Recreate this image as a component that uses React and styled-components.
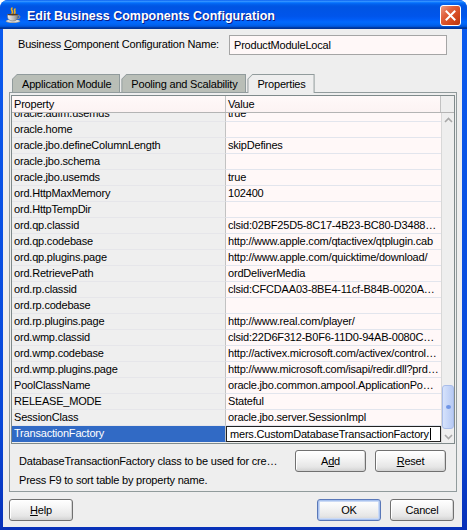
import React from 'react';
import styled, { createGlobalStyle } from 'styled-components';

const GlobalStyle = createGlobalStyle`
  * { box-sizing: border-box; }
  body {
    margin: 0;
    background: #ffffff;
    font-family: "Liberation Sans", Arial, sans-serif;
    font-size: 11px;
    letter-spacing: -0.2px;
    color: #000;
  }
`;

const Window = styled.div`
  width: 467px;
  height: 530px;
  display: flex;
  flex-direction: column;
  background: linear-gradient(to bottom, #0a5bf0, #0847d8 80%, #0831b8);
  border-radius: 8px 8px 0 0;
  overflow: hidden;
`;

const TitleBar = styled.div`
  height: 29px;
  flex-shrink: 0;
  display: flex;
  align-items: center;
  padding: 2px 6px 0 5px;
  gap: 5px;
  background: linear-gradient(to bottom, #0058ee 0%, #3a93ff 4%, #288eff 6%, #127dff 8%, #036ffc 10%, #0262ee 14%, #0057e5 20%, #0054e3 24%, #0055eb 56%, #005bf5 66%, #026afe 76%, #0062ef 86%, #0052d6 92%, #0040ab 94%, #003092 100%);
`;

const Title = styled.div`
  flex: 1;
  color: #fff;
  font-family: "Liberation Sans", Arial, sans-serif;
  font-weight: bold;
  font-size: 12.5px;
  letter-spacing: 0;
  text-shadow: 1px 1px 0 #0a1883;
  white-space: nowrap;
`;

const CloseButton = styled.div`
  width: 21px;
  height: 21px;
  border: 1px solid #fff;
  border-radius: 3px;
  background: linear-gradient(135deg, #eb9b84 0%, #e0603c 35%, #d2461b 70%, #b8360f 100%);
  display: flex;
  align-items: center;
  justify-content: center;
`;

const Client = styled.div`
  flex: 1;
  margin: 0 5px 3px 3px;
  background: #eeeeee;
  display: flex;
  flex-direction: column;
`;

const NameRow = styled.div`
  display: flex;
  align-items: center;
  padding: 6px 15px 0 15px;
`;

const Label = styled.div`
  flex: 1;
  white-space: nowrap;
  margin-top: -2px;
`;

const TextInput = styled.div`
  width: 218px;
  height: 20px;
  border: 1px solid #a5a5a5;
  background: #fff8f8;
  padding: 0 4px;
  display: flex;
  align-items: center;
`;

const TabStrip = styled.div`
  margin-top: 19px;
  height: 18px;
  padding-left: 9px;
  display: flex;
  align-items: flex-start;
  gap: 1px;
`;

const Tab = styled.div`
  position: relative;
  z-index: ${p => (p.$active ? 1 : 0)};
  height: ${p => (p.$active ? 19 : 18)}px;
  padding: 1px 1px 0 1px;
  background: #919b9c;
  clip-path: polygon(5px 0, 100% 0, 100% 100%, 0 100%, 0 5px);
`;

const TabFace = styled.div`
  height: 100%;
  padding: 0 8px 0 9px;
  display: flex;
  align-items: center;
  white-space: nowrap;
  background: ${p => (p.$active ? '#eeeeee' : '#b9beb7')};
  clip-path: polygon(4px 0, 100% 0, 100% 100%, 0 100%, 0 4px);
`;

const Panel = styled.div`
  height: 400px;
  margin: 0 5px 0 6px;
  border: 1px solid #919b9c;
  padding: 2px 1px 0 1px;
  display: flex;
  flex-direction: column;
`;

const Table = styled.div`
  border: 1px solid #7f8a8b;
  display: flex;
  flex-direction: column;
`;

const Header = styled.div`
  display: grid;
  grid-template-columns: 214px 215px 1fr;
  height: 17px;
  border-bottom: 1px solid #b4b4b4;
`;

const HeadCell = styled.div`
  background: ${p => (p.$blank ? '#eeeeee' : 'linear-gradient(to bottom, #fff9f9, #fcf3f3)')};
  border-right: 1px solid #c2c2c2;
  padding: 0 2px;
  line-height: 16px;
  &:last-child { border-right: none; }
`;

const Body = styled.div`
  height: 330px;
  display: flex;
`;

const Rows = styled.div`
  flex: 1;
  overflow: hidden;
`;

const RowList = styled.div`
  margin-top: -7px;
`;

const Row = styled.div`
  display: grid;
  grid-template-columns: 214px 1fr;
  height: 16px;
`;

const PropCell = styled.div`
  background: ${p => (p.$selected ? '#316ac5' : '#efefef')};
  color: ${p => (p.$selected ? '#fff' : '#000')};
  border-right: 1px solid #c2c2c2;
  border-bottom: 1px solid ${p => (p.$selected ? '#316ac5' : '#e6e6ea')};
  padding: 0 2px;
  line-height: 15px;
  white-space: nowrap;
  overflow: hidden;
`;

const ValueCell = styled.div`
  background: #fff8f8;
  border-bottom: 1px solid #e2e5ed;
  padding: 0 2px;
  line-height: 15px;
  white-space: nowrap;
  overflow: hidden;
  text-overflow: ellipsis;
`;

const EditCell = styled.div`
  background: #fff;
  border: 1px solid #222;
  padding: 0 3px;
  display: flex;
  align-items: center;
  white-space: nowrap;
  overflow: hidden;
`;

const Caret = styled.span`
  display: inline-block;
  width: 1px;
  height: 12px;
  margin-left: 1px;
  background: #000;
`;

const ScrollBar = styled.div`
  width: 13px;
  background: #eeeeee;
  border-left: 1px solid #d8d8d8;
  display: flex;
  flex-direction: column;
`;

const Arrow = styled.div`
  height: 13px;
  display: flex;
  align-items: center;
  justify-content: center;
`;

const Track = styled.div`
  flex: 1;
  display: flex;
  flex-direction: column;
  justify-content: flex-end;
  padding: 0 0 1px 0;
`;

const Thumb = styled.div`
  height: 44px;
  border: 1px solid #a9bdea;
  border-radius: 3px;
  background: linear-gradient(to right, #d6e2fb, #c6d6f8 50%, #b7caf3);
  display: flex;
  align-items: center;
  justify-content: center;
`;

const Grip = styled.div`
  width: 5px;
  height: 4px;
  border-radius: 50%;
  background: #6f95e6;
`;

const DescRow = styled.div`
  display: flex;
  align-items: flex-start;
  margin-top: 6px;
  padding: 0 9px 0 8px;
`;

const DescText = styled.div`
  flex: 1;
  min-width: 0;
  margin-right: 13px;
`;

const DescLine = styled.div`
  line-height: ${p => p.$h}px;
  white-space: nowrap;
  overflow: hidden;
  text-overflow: ellipsis;
`;

const ButtonGroup = styled.div`
  display: flex;
  gap: 9px;
`;

const Button = styled.button`
  width: ${p => p.$w}px;
  height: 22px;
  padding: 0;
  font-family: "Liberation Sans", Arial, sans-serif;
  font-size: 11px;
  letter-spacing: -0.2px;
  color: #000;
  border: 1px solid ${p => (p.$default ? '#5a78b8' : '#707070')};
  border-radius: 3px;
  background: linear-gradient(to bottom, #ffffff 0%, #f6f6f6 35%, #e6e6e6 80%, #d2d2d2 100%);
  box-shadow: ${p => (p.$default
    ? 'inset 0 0 0 1px #a9c2ee, inset 0 0 0 2px #cbdaf5'
    : 'inset -1px -1px 0 #d4d4d4, inset 1px 1px 0 #ffffff')};
  margin-left: ${p => (p.$push ? 'auto' : '0')};
`;

const Footer = styled.div`
  display: flex;
  gap: 9px;
  padding: 7px 8px 6px 6px;
`;

const rows = [
  ['oracle.adfm.usemds', 'true'],
  ['oracle.home', ''],
  ['oracle.jbo.defineColumnLength', 'skipDefines'],
  ['oracle.jbo.schema', ''],
  ['oracle.jbo.usemds', 'true'],
  ['ord.HttpMaxMemory', '102400'],
  ['ord.HttpTempDir', ''],
  ['ord.qp.classid', 'clsid:02BF25D5-8C17-4B23-BC80-D3488ABDDC6B'],
  ['ord.qp.codebase', 'http://www.apple.com/qtactivex/qtplugin.cab'],
  ['ord.qp.plugins.page', 'http://www.apple.com/quicktime/download/'],
  ['ord.RetrievePath', 'ordDeliverMedia'],
  ['ord.rp.classid', 'clsid:CFCDAA03-8BE4-11cf-B84B-0020AFBBCCFA'],
  ['ord.rp.codebase', ''],
  ['ord.rp.plugins.page', 'http://www.real.com/player/'],
  ['ord.wmp.classid', 'clsid:22D6F312-B0F6-11D0-94AB-0080C74C7E95'],
  ['ord.wmp.codebase', 'http://activex.microsoft.com/activex/controls/mplayer/en/nsmp2inf.cab'],
  ['ord.wmp.plugins.page', 'http://www.microsoft.com/isapi/redir.dll?prd=windows&sbp=mediaplayer'],
  ['PoolClassName', 'oracle.jbo.common.ampool.ApplicationPoolImpl'],
  ['RELEASE_MODE', 'Stateful'],
  ['SessionClass', 'oracle.jbo.server.SessionImpl'],
];

function CupIcon() {
  return (
    <svg width="17" height="17" viewBox="0 0 17 17">
      <defs>
        <linearGradient id="cup" x1="0" x2="1" y1="0" y2="0">
          <stop offset="0" stopColor="#f4f4f4" />
          <stop offset="0.6" stopColor="#b8b8b8" />
          <stop offset="1" stopColor="#7c7c7c" />
        </linearGradient>
      </defs>
      <path d="M7 1 C5 3 9 4 7 6.5 M10 2 C8.5 3.5 11 4.5 9.5 6.5" stroke="#f2b21c" strokeWidth="1.6" fill="none" strokeLinecap="round" />
      <ellipse cx="8" cy="14.3" rx="7.3" ry="1.8" fill="#9a9a9a" />
      <ellipse cx="8" cy="14" rx="6.5" ry="1.3" fill="#dcdcdc" />
      <path d="M2.5 7.5 H13 V9.5 C13 12.5 10.5 14 7.75 14 C5 14 2.5 12.5 2.5 9.5 Z" fill="url(#cup)" stroke="#6a6a6a" strokeWidth="0.6" />
      <path d="M13 8.5 C15.5 8.5 15.5 11.5 12.5 11.8" stroke="#8a8a8a" strokeWidth="1.2" fill="none" />
      <ellipse cx="7.75" cy="7.6" rx="5.2" ry="0.9" fill="#5a3a1a" />
    </svg>
  );
}

export default function App() {
  return (
    <>
      <GlobalStyle />
      <Window>
        <TitleBar>
          <CupIcon />
          <Title>Edit Business Components Configuration</Title>
          <CloseButton>
            <svg width="11" height="11" viewBox="0 0 11 11">
              <path d="M1.5 1.5 L9.5 9.5 M9.5 1.5 L1.5 9.5" stroke="#fff" strokeWidth="2" strokeLinecap="square" />
            </svg>
          </CloseButton>
        </TitleBar>
        <Client>
          <NameRow>
            <Label>Business <u>C</u>omponent Configuration Name:</Label>
            <TextInput>ProductModuleLocal</TextInput>
          </NameRow>
          <TabStrip>
            <Tab><TabFace>Application Module</TabFace></Tab>
            <Tab><TabFace>Pooling and Scalability</TabFace></Tab>
            <Tab $active><TabFace $active>Properties</TabFace></Tab>
          </TabStrip>
          <Panel>
            <Table>
              <Header>
                <HeadCell>Property</HeadCell>
                <HeadCell>Value</HeadCell>
                <HeadCell $blank />
              </Header>
              <Body>
                <Rows>
                  <RowList>
                    {rows.map(([name, value]) => (
                      <Row key={name}>
                        <PropCell>{name}</PropCell>
                        <ValueCell>{value}</ValueCell>
                      </Row>
                    ))}
                    <Row>
                      <PropCell $selected>TransactionFactory</PropCell>
                      <EditCell>mers.CustomDatabaseTransactionFactory<Caret /></EditCell>
                    </Row>
                  </RowList>
                </Rows>
                <ScrollBar>
                  <Arrow>
                    <svg width="9" height="6" viewBox="0 0 9 6">
                      <path d="M1 5 L4.5 1.5 L8 5" stroke="#a8a8a8" strokeWidth="1.6" fill="none" />
                    </svg>
                  </Arrow>
                  <Track>
                    <Thumb><Grip /></Thumb>
                  </Track>
                  <Arrow>
                    <svg width="9" height="6" viewBox="0 0 9 6">
                      <path d="M1 1 L4.5 4.5 L8 1" stroke="#a8a8a8" strokeWidth="1.6" fill="none" />
                    </svg>
                  </Arrow>
                </ScrollBar>
              </Body>
            </Table>
            <DescRow>
              <DescText>
                <DescLine $h={22}>DatabaseTransactionFactory class to be used for creating transactions</DescLine>
                <DescLine $h={17}>Press F9 to sort table by property name.</DescLine>
              </DescText>
              <ButtonGroup>
                <Button $w={71}>A<u>d</u>d</Button>
                <Button $w={71}><u>R</u>eset</Button>
              </ButtonGroup>
            </DescRow>
          </Panel>
          <Footer>
            <Button $w={64}><u>H</u>elp</Button>
            <Button $w={64} $default $push>OK</Button>
            <Button $w={64}>Cancel</Button>
          </Footer>
        </Client>
      </Window>
    </>
  );
}
